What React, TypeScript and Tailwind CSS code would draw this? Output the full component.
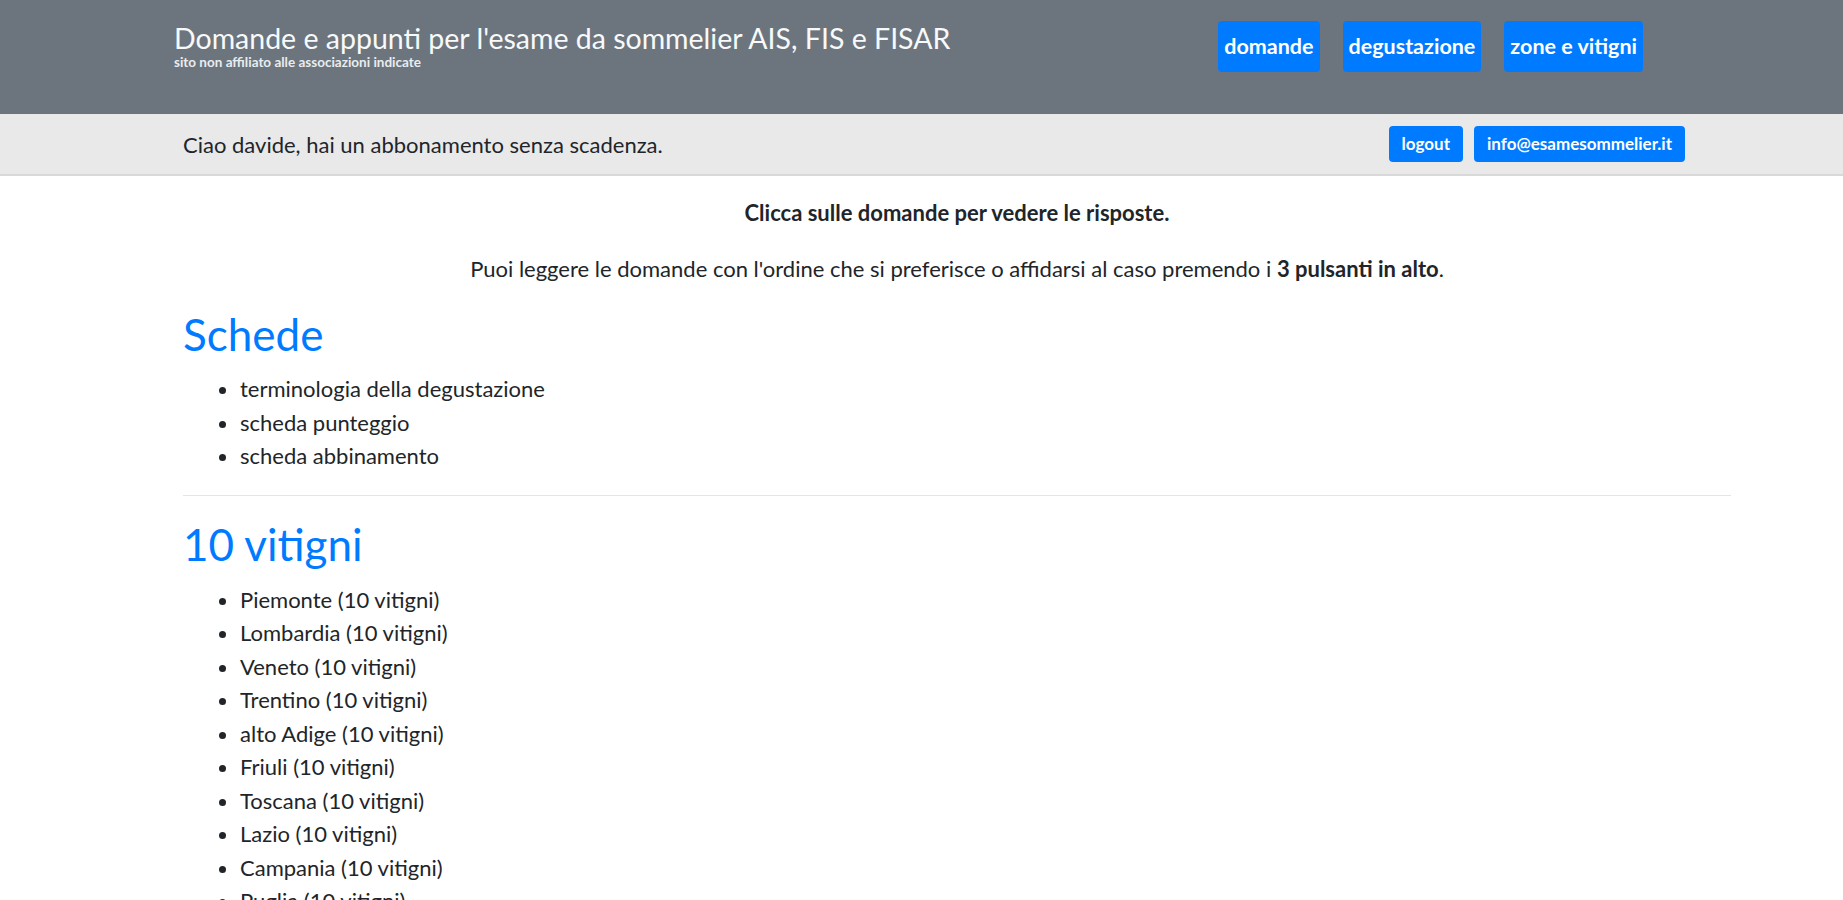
const schede = ['terminologia della degustazione', 'scheda punteggio', 'scheda abbinamento'];

const regioni = [
  'Piemonte',
  'Lombardia',
  'Veneto',
  'Trentino',
  'alto Adige',
  'Friuli',
  'Toscana',
  'Lazio',
  'Campania',
  'Puglia',
  'Sicilia',
  'Sardegna',
];

export default function App() {
  return (
    <div className="min-h-screen bg-white font-['Lato','Liberation_Sans',sans-serif] text-[#212529]">
      {/* Header */}
      <div className="flex h-[114px] items-start justify-between bg-[#6c757d] pl-[174px] pr-[200px]">
        <div className="pt-[21px]">
          <h1 className="text-[28.5px] leading-[34px] text-[#f8f9fa]">
            Domande e appunti per l'esame da sommelier AIS, FIS e FISAR
          </h1>
          <p className="text-[13.5px] leading-[15px] font-bold text-[#e9ecef]">
            sito non affiliato alle associazioni indicate
          </p>
        </div>
        <div className="flex gap-[23px] pt-[21px]">
          <button className="h-[51px] rounded-[4px] bg-[#007bff] px-[6px] text-[21.5px] font-bold text-white">domande</button>
          <button className="h-[51px] rounded-[4px] bg-[#007bff] px-[6px] text-[21.5px] font-bold text-white">degustazione</button>
          <button className="h-[51px] rounded-[4px] bg-[#007bff] px-[6px] text-[21.5px] font-bold text-white">zone e vitigni</button>
        </div>
      </div>

      {/* User bar */}
      <div className="flex h-[62px] items-center justify-between border-b-2 border-[#d9d9d9] bg-[#e9e9e9] pl-[183px] pr-[158px]">
        <p className="text-[22px]">Ciao davide, hai un abbonamento senza scadenza.</p>
        <div className="flex gap-[11px]">
          <button className="h-[36px] rounded-[4px] bg-[#007bff] px-[13px] text-[17px] font-bold text-white">logout</button>
          <button className="h-[36px] rounded-[4px] bg-[#007bff] px-[13px] text-[17px] font-bold text-white">info@esamesommelier.it</button>
        </div>
      </div>

      {/* Content */}
      <div className="ml-[183px] w-[1548px] pt-[23px]">
        <p className="mb-[28px] text-center text-[22px] leading-[28px] font-bold">
          Clicca sulle domande per vedere le risposte.
        </p>
        <p className="text-center text-[22px] leading-[28px]">
          Puoi leggere le domande con l'ordine che si preferisce o affidarsi al caso premendo i <b>3 pulsanti in alto</b>.
        </p>

        <h2 className="mt-[25px] text-[44px] leading-[53px] text-[#007bff]">Schede</h2>
        <ul className="mt-[11px] list-disc pl-[57px] text-[22px] leading-[33.5px]">
          {schede.map((s) => (
            <li key={s}>{s}</li>
          ))}
        </ul>

        <hr className="mt-[22px] border-t border-[#e5e5e5]" />

        <h2 className="mt-[22px] text-[44px] leading-[53px] text-[#007bff]">10 vitigni</h2>
        <ul className="mt-[12px] list-disc pl-[57px] text-[22px] leading-[33.5px]">
          {regioni.map((r) => (
            <li key={r}>{r} (10 vitigni)</li>
          ))}
        </ul>
      </div>
    </div>
  );
}
